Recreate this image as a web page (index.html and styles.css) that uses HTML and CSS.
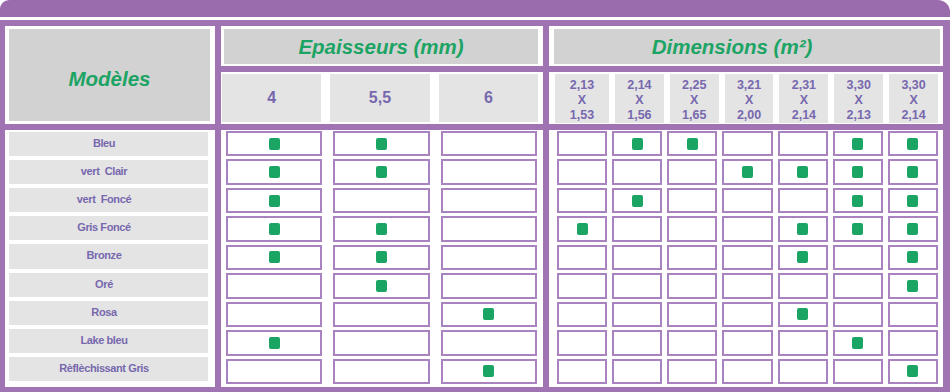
FILE: index.html
```html
<!DOCTYPE html>
<html lang="fr">
<head>
<meta charset="utf-8">
<title>Modèles</title>
<link rel="stylesheet" href="styles.css">
</head>
<body>
<div class="sheet">
  <div class="topbar"></div>
  <div class="frame">
    <div class="panel p-models"><div class="hcell title">Modèles</div></div>
    <div class="panel p-ep-title"><div class="hcell title">Epaisseurs (mm)</div></div>
    <div class="panel p-dim-title"><div class="hcell title">Dimensions (m²)</div></div>

    <div class="panel p-ep-sub">
      <div class="scell num">4</div>
      <div class="scell num">5,5</div>
      <div class="scell num">6</div>
    </div>
    <div class="panel p-dim-sub">
      <div class="scell dim">2,13<br>X<br>1,53</div>
      <div class="scell dim">2,14<br>X<br>1,56</div>
      <div class="scell dim">2,25<br>X<br>1,65</div>
      <div class="scell dim">3,21<br>X<br>2,00</div>
      <div class="scell dim">2,31<br>X<br>2,14</div>
      <div class="scell dim">3,30<br>X<br>2,13</div>
      <div class="scell dim">3,30<br>X<br>2,14</div>
    </div>

    <div class="panel p-labels">
      <div class="label">Bleu</div>
      <div class="label">vert&nbsp; Clair</div>
      <div class="label">vert&nbsp; Foncé</div>
      <div class="label">Gris Foncé</div>
      <div class="label">Bronze</div>
      <div class="label">Oré</div>
      <div class="label">Rosa</div>
      <div class="label">Lake bleu</div>
      <div class="label">Rèflèchissant Gris</div>
    </div>

    <div class="panel p-ep-body">
      <div class="box"><span class="mark"></span></div><div class="box"><span class="mark"></span></div><div class="box"></div>
      <div class="box"><span class="mark"></span></div><div class="box"><span class="mark"></span></div><div class="box"></div>
      <div class="box"><span class="mark"></span></div><div class="box"></div><div class="box"></div>
      <div class="box"><span class="mark"></span></div><div class="box"><span class="mark"></span></div><div class="box"></div>
      <div class="box"><span class="mark"></span></div><div class="box"><span class="mark"></span></div><div class="box"></div>
      <div class="box"></div><div class="box"><span class="mark"></span></div><div class="box"></div>
      <div class="box"></div><div class="box"></div><div class="box"><span class="mark"></span></div>
      <div class="box"><span class="mark"></span></div><div class="box"></div><div class="box"></div>
      <div class="box"></div><div class="box"></div><div class="box"><span class="mark"></span></div>
    </div>

    <div class="panel p-dim-body">
      <div class="box"></div><div class="box"><span class="mark"></span></div><div class="box"><span class="mark"></span></div><div class="box"></div><div class="box"></div><div class="box"><span class="mark"></span></div><div class="box"><span class="mark"></span></div>
      <div class="box"></div><div class="box"></div><div class="box"></div><div class="box"><span class="mark"></span></div><div class="box"><span class="mark"></span></div><div class="box"><span class="mark"></span></div><div class="box"><span class="mark"></span></div>
      <div class="box"></div><div class="box"><span class="mark"></span></div><div class="box"></div><div class="box"></div><div class="box"></div><div class="box"><span class="mark"></span></div><div class="box"><span class="mark"></span></div>
      <div class="box"><span class="mark"></span></div><div class="box"></div><div class="box"></div><div class="box"></div><div class="box"><span class="mark"></span></div><div class="box"><span class="mark"></span></div><div class="box"><span class="mark"></span></div>
      <div class="box"></div><div class="box"></div><div class="box"></div><div class="box"></div><div class="box"><span class="mark"></span></div><div class="box"></div><div class="box"><span class="mark"></span></div>
      <div class="box"></div><div class="box"></div><div class="box"></div><div class="box"></div><div class="box"></div><div class="box"></div><div class="box"><span class="mark"></span></div>
      <div class="box"></div><div class="box"></div><div class="box"></div><div class="box"></div><div class="box"><span class="mark"></span></div><div class="box"></div><div class="box"></div>
      <div class="box"></div><div class="box"></div><div class="box"></div><div class="box"></div><div class="box"></div><div class="box"><span class="mark"></span></div><div class="box"></div>
      <div class="box"></div><div class="box"></div><div class="box"></div><div class="box"></div><div class="box"></div><div class="box"></div><div class="box"><span class="mark"></span></div>
    </div>
  </div>
</div>
</body>
</html>
```
FILE: styles.css
```css
* { box-sizing: border-box; }

html, body {
  margin: 0;
  padding: 0;
  background: #ffffff;
}

body {
  font-family: "Liberation Sans", Arial, sans-serif;
}

.sheet {
  width: 950px;
  height: 392px;
  display: flex;
  flex-direction: column;
}

.topbar {
  height: 17px;
  margin-bottom: 3px;
  background: #9a6cad;
  border-radius: 9px 12px 0 0;
}

.frame {
  height: 372px;
  background: #a073b3;
  padding: 6px 7px 5px 5px;
  display: grid;
  grid-template-columns: 210px 322px 394px;
  grid-template-rows: 40px 52px 257px;
  gap: 6px;
}

.panel {
  background: #ffffff;
}

/* ---------- header ---------- */
.p-models {
  grid-row: 1 / 3;
  grid-column: 1;
  padding: 3px 5px 3px 4px;
  display: flex;
}
.p-ep-title {
  grid-row: 1;
  grid-column: 2;
  padding: 3px 5px 2px 3px;
  display: flex;
}
.p-dim-title {
  grid-row: 1;
  grid-column: 3;
  padding: 3px 3px 2px 5px;
  display: flex;
}

.hcell {
  flex: 1;
  background: #d2d2d2;
  display: flex;
  align-items: center;
  justify-content: center;
}

.title {
  color: #1ca464;
  font-weight: bold;
  font-style: italic;
  font-size: 20.5px;
}
.p-models .title {
  padding-top: 8px;
}
.p-dim-title .title {
  padding-right: 30px;
}

.p-ep-sub {
  grid-row: 2;
  grid-column: 2;
  padding: 2px 5px 2px 1px;
  display: grid;
  grid-template-columns: repeat(3, 1fr);
  column-gap: 9px;
}
.p-dim-sub {
  grid-row: 2;
  grid-column: 3;
  padding: 2px 5px 2px 6px;
  display: grid;
  grid-template-columns: 54px repeat(6, 1fr);
  column-gap: 6px;
}

.scell {
  background: #e4e4e4;
  display: flex;
  align-items: center;
  justify-content: center;
  text-align: center;
  color: #7768ae;
  font-weight: bold;
}
.num {
  font-size: 16px;
}
.dim {
  font-size: 12.5px;
  line-height: 15px;
  padding-top: 4px;
}

/* ---------- body ---------- */
.p-labels {
  grid-row: 3;
  grid-column: 1;
  padding: 2px 7px 6px 4px;
  display: grid;
  grid-template-rows: repeat(9, 1fr);
  row-gap: 4px;
}
.label {
  background: #e4e4e4;
  display: flex;
  align-items: center;
  justify-content: center;
  color: #7768ae;
  font-weight: bold;
  font-size: 11px;
  letter-spacing: -0.4px;
  padding: 0 9px 2px 0;
}

.p-ep-body {
  grid-row: 3;
  grid-column: 2;
  padding: 1px 6px 3px 5px;
  display: grid;
  grid-template-columns: repeat(3, 1fr);
  grid-template-rows: repeat(9, 1fr);
  column-gap: 11px;
  row-gap: 3px;
}
.p-dim-body {
  grid-row: 3;
  grid-column: 3;
  padding: 1px 5px 3px 8px;
  display: grid;
  grid-template-columns: repeat(7, 1fr);
  grid-template-rows: repeat(9, 1fr);
  column-gap: 5px;
  row-gap: 3px;
}

.box {
  border: 2px solid #a983c0;
  background: #ffffff;
  display: flex;
  align-items: center;
  justify-content: center;
}

.mark {
  width: 11px;
  height: 12px;
  border-radius: 2px;
  background: #1ba564;
}
```
